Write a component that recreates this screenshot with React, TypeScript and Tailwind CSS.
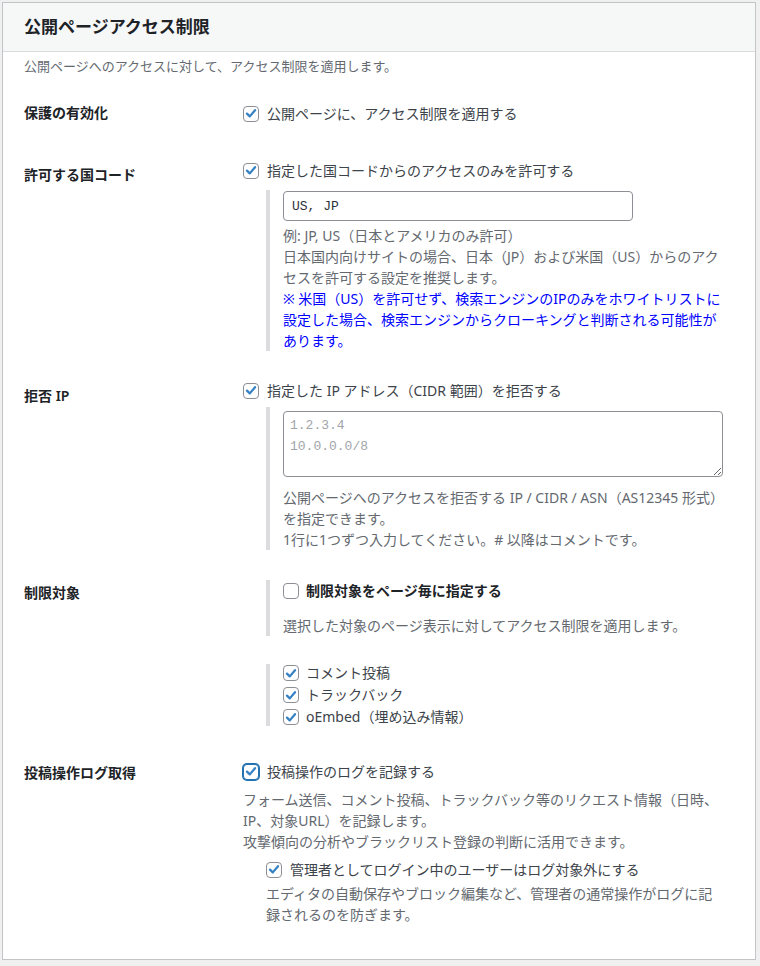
import type { ReactNode } from 'react'

const FONT = '"Noto Sans", "Noto Sans CJK JP", sans-serif'
const MONO = '"Liberation Mono", "Noto Sans CJK JP", monospace'

function Check({ on = true, focus = false }: { on?: boolean; focus?: boolean }) {
  return (
    <span
      className={
        focus
          ? 'inline-flex h-4 w-4 shrink-0 items-center justify-center rounded-[4px] border border-[#2271b1] bg-white shadow-[0_0_0_1px_#2271b1]'
          : 'inline-flex h-4 w-4 shrink-0 items-center justify-center rounded-[4px] border border-[#8c8f94] bg-white'
      }
    >
      {on && (
        <svg viewBox="0 0 16 16" className="h-[15px] w-[15px]">
          <path
            d="M3.4 8.1 L6.6 11.3 L12.6 4.2"
            fill="none"
            stroke="#3582c4"
            strokeWidth="2.6"
            strokeLinecap="round"
            strokeLinejoin="round"
          />
        </svg>
      )}
    </span>
  )
}

function CheckLine({
  children,
  on = true,
  focus = false,
  bold = false,
  gap = 'gap-2',
  lh = 'leading-[21px]',
}: {
  children: ReactNode
  on?: boolean
  focus?: boolean
  bold?: boolean
  gap?: string
  lh?: string
}) {
  return (
    <label className={`flex items-center ${gap} text-[14px] ${lh} ${bold ? 'font-semibold text-[#1d2327]' : 'text-[#3c434a]'}`}>
      <Check on={on} focus={focus} />
      <span>{children}</span>
    </label>
  )
}

function Row({ label, thPad, tdPad, children }: { label: string; thPad: string; tdPad: string; children: ReactNode }) {
  return (
    <div className="flex">
      <div className={`w-[219px] shrink-0 text-[14px] leading-[21px] font-semibold text-[#1d2327] ${thPad}`}>{label}</div>
      <div className={`min-w-0 flex-1 ${tdPad}`}>{children}</div>
    </div>
  )
}

const help = 'text-[14px] leading-[21px] text-[#646970]'

export default function App() {
  return (
    <div className="min-h-screen bg-[#f0f0f1] pl-[2px] pt-[2px]" style={{ fontFamily: FONT }}>
      <div className="w-[754px] border border-[#c3c4c7] bg-white">
        <div className="flex h-[49px] items-center border-b border-[#dcdcde] bg-[#f6f7f7] pl-[21px]">
          <h2 className="text-[17px] font-semibold text-[#1d2327]">公開ページアクセス制限</h2>
        </div>

        <div className="pl-[21px] pr-[9px] pb-[34px]">
          <p className="mt-[4px] text-[13px] leading-[20px] text-[#646970]">
            公開ページへのアクセスに対して、アクセス制限を適用します。
          </p>

          <Row label="保護の有効化" thPad="pt-[26px]" tdPad="pt-[27px] pb-[20px]">
            <CheckLine>公開ページに、アクセス制限を適用する</CheckLine>
          </Row>

          <Row label="許可する国コード" thPad="pt-[20px]" tdPad="pt-[16px] pb-[13px]">
            <CheckLine>指定した国コードからのアクセスのみを許可する</CheckLine>
            <div className="ml-[23px] mt-[9px] border-l-4 border-[#dcdcde] pl-[13px] pt-[1px]">
              <input
                readOnly
                value="US, JP"
                className="block h-[30px] w-[350px] rounded-[4px] border border-[#8c8f94] bg-white px-[8px] text-[13px] text-[#2c3338] outline-none"
                style={{ fontFamily: MONO }}
              />
              <div className={`mt-[4px] ${help}`}>
                <p>例: JP, US（日本とアメリカのみ許可）</p>
                <p>
                  日本国内向けサイトの場合、日本（JP）および米国（US）からのアク
                  <br />
                  セスを許可する設定を推奨します。
                </p>
                <p className="text-[#0000ff]">
                  ※ 米国（US）を許可せず、検索エンジンのIPのみをホワイトリストに
                  <br />
                  設定した場合、検索エンジンからクローキングと判断される可能性が
                  <br />
                  あります。
                </p>
              </div>
            </div>
          </Row>

          <Row label="拒否 IP" thPad="pt-[21px]" tdPad="pt-[16px] pb-[11px]">
            <CheckLine>指定した IP アドレス（CIDR 範囲）を拒否する</CheckLine>
            <div className="ml-[23px] mt-[6px] border-l-4 border-[#dcdcde] pl-[13px] pt-[4px]">
              <textarea
                placeholder={'1.2.3.4\n10.0.0.0/8'}
                className="block h-[66px] w-[440px] rounded-[4px] border border-[#8c8f94] bg-white px-[6px] py-[3px] text-[13px] leading-[21px] text-[#2c3338] outline-none placeholder:text-[#a0a5aa]"
                style={{ fontFamily: MONO }}
              />
              <div className={`mt-[10px] ${help}`}>
                <p>
                  公開ページへのアクセスを拒否する IP / CIDR / ASN（AS12345 形式）
                  <br />
                  を指定できます。
                </p>
                <p>1行に1つずつ入力してください。# 以降はコメントです。</p>
              </div>
            </div>
          </Row>

          <Row label="制限対象" thPad="pt-[21px]" tdPad="pt-[19px] pb-[15px]">
            <div className="ml-[23px] border-l-4 border-[#dcdcde] pl-[13px]">
              <CheckLine on={false} bold gap="gap-[7px]">
                制限対象をページ毎に指定する
              </CheckLine>
              <p className={`mt-[14px] ${help}`}>選択した対象のページ表示に対してアクセス制限を適用します。</p>
            </div>
            <div className="ml-[23px] mt-[28px] flex flex-col gap-[4px] border-l-4 border-[#dcdcde] pl-[13px]">
              <CheckLine gap="gap-[7px]" lh="leading-[18px]">コメント投稿</CheckLine>
              <CheckLine gap="gap-[7px]" lh="leading-[18px]">トラックバック</CheckLine>
              <CheckLine gap="gap-[7px]" lh="leading-[18px]">oEmbed（埋め込み情報）</CheckLine>
            </div>
          </Row>

          <Row label="投稿操作ログ取得" thPad="pt-[21px]" tdPad="pt-[20px]">
            <CheckLine focus>投稿操作のログを記録する</CheckLine>
            <div className={`mt-[7px] ${help}`}>
              <p>
                フォーム送信、コメント投稿、トラックバック等のリクエスト情報（日時、
                <br />
                IP、対象URL）を記録します。
              </p>
              <p>攻撃傾向の分析やブラックリスト登録の判断に活用できます。</p>
            </div>
            <div className="ml-[23px] mt-[7px]">
              <CheckLine>管理者としてログイン中のユーザーはログ対象外にする</CheckLine>
              <p className={`mt-[3px] ${help}`}>
                エディタの自動保存やブロック編集など、管理者の通常操作がログに記
                <br />
                録されるのを防ぎます。
              </p>
            </div>
          </Row>
        </div>
      </div>
    </div>
  )
}
